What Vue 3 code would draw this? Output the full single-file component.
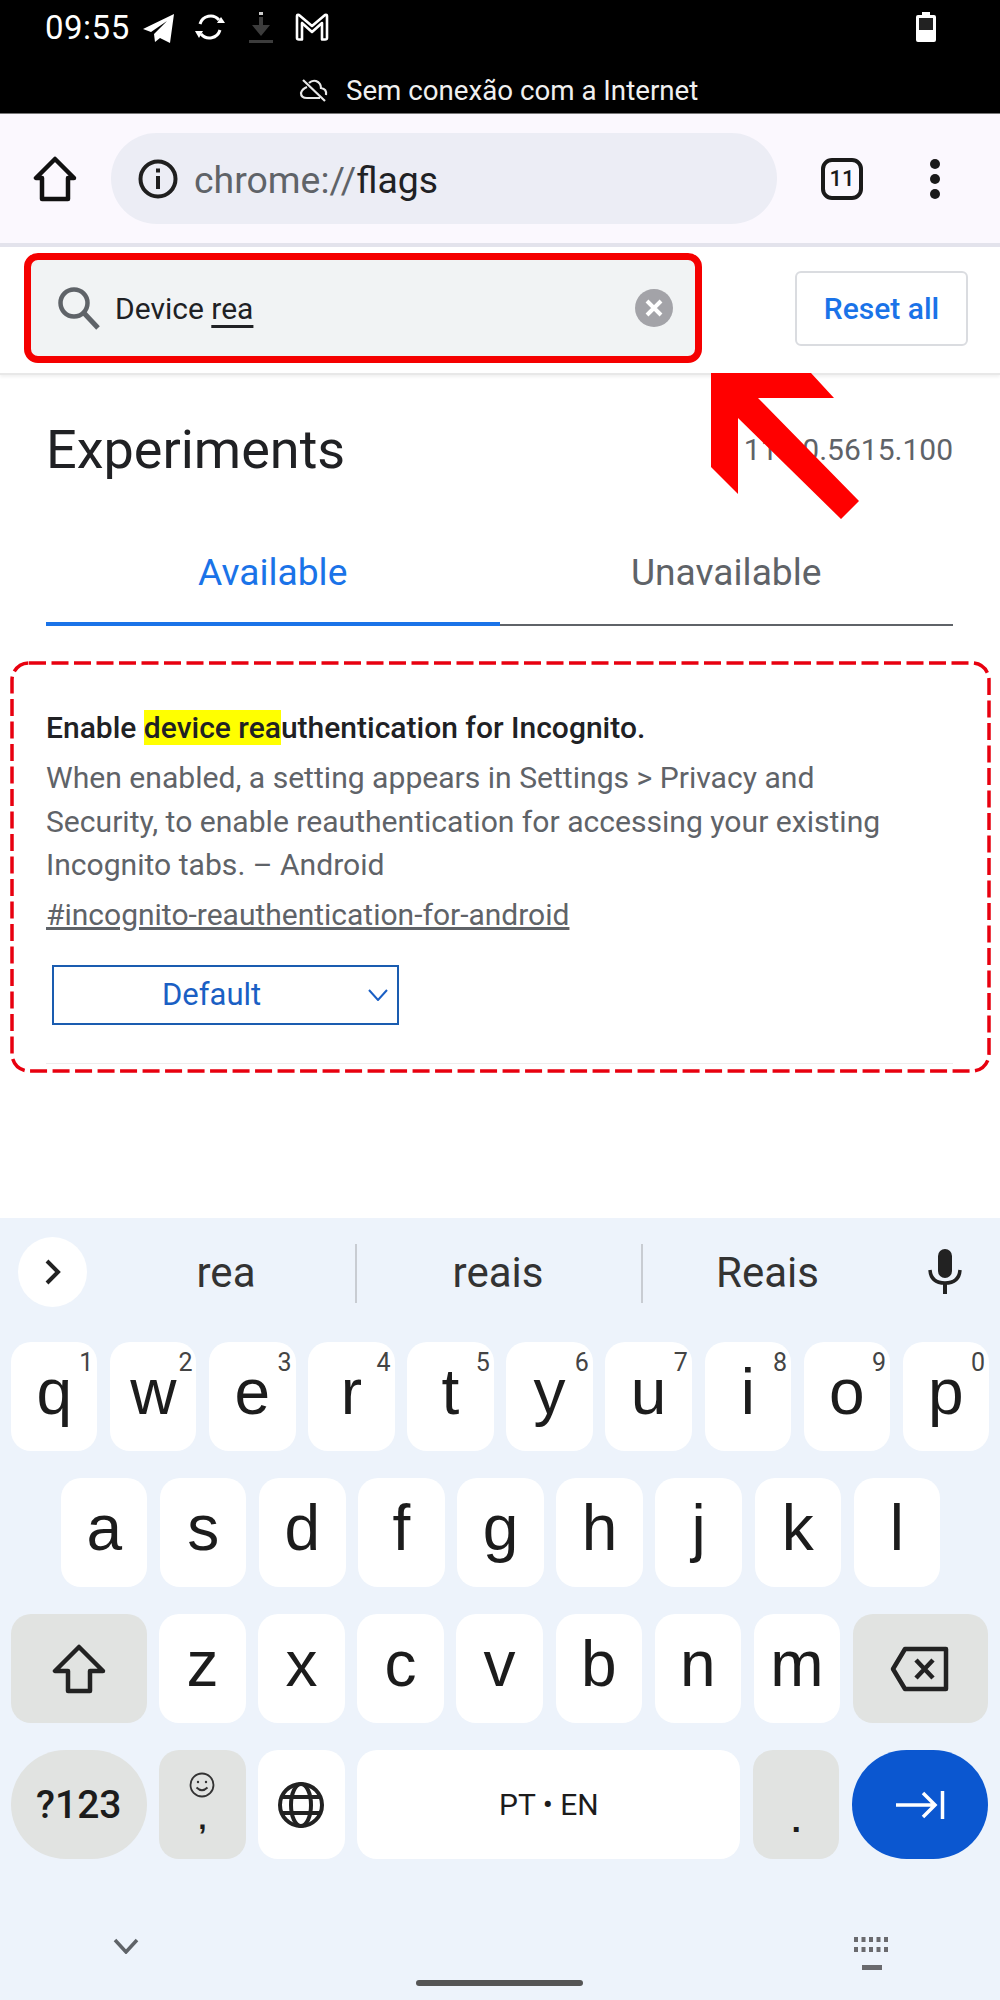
<template>
  <div class="phone">
    <div class="status">
      <div class="status-top">
        <span class="time">09:55</span>
        <svg class="ic-tg" width="34" height="32" viewBox="0 0 34 32"><path d="M1 17 L32 2 L28 31 L18 26 L13 30 L12 22 L25 9 L9 20 Z" fill="#fff"/></svg>
        <svg class="ic-sync" width="34" height="34" viewBox="0 0 34 34" fill="none" stroke="#fff" stroke-width="3"><path d="M7 14 A11 11 0 0 1 26 10"/><path d="M27 20 A11 11 0 0 1 8 24"/><path d="M24 13 H32 L28 7 Z" fill="#fff" stroke="none"/><path d="M2 21 H10 L6 28 Z" fill="#fff" stroke="none"/></svg>
        <svg class="ic-dl" width="24" height="32" viewBox="0 0 24 32"><path d="M10 0 H14 V3 H10 Z" fill="#ccc"/><path d="M10 5 H14 V13 H21 L12 24 L3 13 H10 Z" fill="#3c3c3c"/><path d="M0 28 H24 V31 H0 Z" fill="#3c3c3c"/></svg>
        <svg class="ic-m" width="34" height="28" viewBox="0 0 34 28" fill="none" stroke="#fff" stroke-width="2.6"><path d="M2 25 V3 Q2 1.5 4 2 L17 13 L30 2 Q32 1.5 32 3 V25 Q32 26.500 30 26.500 H27 V10 L17 19 L7 10 V26.500 H4 Q2 26.500 2 25 Z" stroke-linejoin="round"/></svg>
        <svg class="ic-batt" width="20" height="30" viewBox="0 0 20 30"><path d="M6 0 H14 V3 H18 Q20 3 20 5 V28 Q20 30 18 30 H2 Q0 30 0 28 V5 Q0 3 2 3 H6 Z" fill="#fff"/><rect x="3" y="6" width="14" height="12" fill="#222"/></svg>
      </div>
      <div class="offline">
        <svg width="30" height="24" viewBox="0 0 30 24" fill="none" stroke="#e8e8e8" stroke-width="2.200"><path d="M8 9 Q3 11 2 15 Q2 20 8 20 H21"/><path d="M10 5 Q13 2 17 3 Q22 5 22 10 Q28 11 27 17"/><path d="M4 2 L26 23"/></svg>
        <span>Sem conexão com a Internet</span>
      </div>
    </div>

    <div class="toolbar">
      <svg class="home" width="44" height="46" viewBox="0 0 44 46" fill="none" stroke="#111" stroke-width="4.500" stroke-linejoin="round"><path d="M22 3 L3 22 H9 V43 H35 V22 H41 Z"/></svg>
      <div class="omnibox">
        <svg width="42" height="42" viewBox="0 0 42 42" fill="none"><circle cx="21" cy="21" r="17.500" stroke="#1f1f1f" stroke-width="4"/><path d="M19 18 H23 V31 H19 Z M19 10.500 H23 V14.500 H19 Z" fill="#1f1f1f"/></svg>
        <span class="url"><span class="scheme">chrome://</span>flags</span>
      </div>
      <div class="tabs-count">11</div>
      <div class="menu"><i></i><i></i><i></i></div>
    </div>
    <div class="toolbar-line"></div>

    <div class="searchbar">
      <div class="search">
        <svg width="44" height="44" viewBox="0 0 44 44" fill="none" stroke="#5f6368" stroke-width="4.500"><circle cx="17" cy="17" r="13.500"/><path d="M27 27 L41 42" stroke-width="5"/></svg>
        <span class="query">Device <u>rea</u></span>
        <svg class="clear" width="38" height="38" viewBox="0 0 38 38"><circle cx="19" cy="19" r="19" fill="#a3a3a8"/><path d="M12 12 L26 26 M26 12 L12 26" stroke="#fff" stroke-width="4"/></svg>
      </div>
      <button class="reset">Reset all</button>
    </div>

    <div class="page">
      <div class="head">
        <h1>Experiments</h1>
        <span class="version">111.0.5615.100</span>
      </div>
      <div class="tabs">
        <div class="tab active">Available</div>
        <div class="tab">Unavailable</div>
      </div>
      <div class="flag">
        <div class="flag-title">Enable <mark>device rea</mark>uthentication for Incognito.</div>
        <p class="flag-desc">When enabled, a setting appears in Settings &gt; Privacy and<br>Security, to enable reauthentication for accessing your existing<br>Incognito tabs. – Android</p>
        <a class="flag-link">#incognito-reauthentication-for-android</a>
        <div class="select">
          <span>Default</span>
          <svg width="20" height="12" viewBox="0 0 20 12" fill="none" stroke="#1a5fc4" stroke-width="2"><path d="M1 1 L10 11 L19 1"/></svg>
        </div>
      </div>
    </div>

    <div class="kb">
      <div class="suggest">
        <div class="expand">
          <svg width="18" height="26" viewBox="0 0 18 26" fill="none" stroke="#222" stroke-width="4"><path d="M3 2 L14 13 L3 24"/></svg>
        </div>
        <div class="word">rea</div>
        <div class="word">reais</div>
        <div class="word">Reais</div>
        <svg class="mic" width="36" height="46" viewBox="0 0 36 46"><rect x="11" y="0" width="14" height="29" rx="7" fill="#222"/><path d="M3 21 Q4 34 18 34 Q32 34 33 21" fill="none" stroke="#222" stroke-width="3.500"/><path d="M16 34 H20 V45 H16 Z" fill="#222"/></svg>
      </div>

      <div class="row">
        <div v-for="k in row1" :key="k.l" class="key ltr">{{ k.l }}<sup>{{ k.n }}</sup></div>
      </div>
      <div class="row row2">
        <div v-for="l in row2" :key="l" class="key ltr">{{ l }}</div>
      </div>
      <div class="row">
        <div class="key wide grey">
          <svg width="54" height="50" viewBox="0 0 54 50" fill="none" stroke="#222" stroke-width="4.500" stroke-linejoin="round"><path d="M27 3 L3 27 H16 V47 H38 V27 H51 Z"/></svg>
        </div>
        <div v-for="l in row3" :key="l" class="key ltr">{{ l }}</div>
        <div class="key wide grey">
          <svg width="60" height="46" viewBox="0 0 60 46" fill="none" stroke="#222" stroke-width="4.500" stroke-linejoin="round"><path d="M15 3 H56 V43 H15 L3 23 Z"/><path d="M26 14 L43 32 M43 14 L26 32"/></svg>
        </div>
      </div>
      <div class="row">
        <div class="key wide grey pill sym">?123</div>
        <div class="key grey emoji">
          <svg width="26" height="26" viewBox="0 0 26 26" fill="none" stroke="#333" stroke-width="1.800"><circle cx="13" cy="13" r="11.500"/><circle cx="9" cy="10" r="1.200" fill="#333" stroke="none"/><circle cx="17" cy="10" r="1.200" fill="#333" stroke="none"/><path d="M7.500 15.500 Q13 21 18.500 15.500"/></svg>
          <span>,</span>
        </div>
        <div class="key">
          <svg width="46" height="46" viewBox="0 0 46 46" fill="none" stroke="#222" stroke-width="4"><circle cx="23" cy="23" r="21"/><ellipse cx="23" cy="23" rx="10" ry="21"/><path d="M4 15 H42 M4 31 H42"/></svg>
        </div>
        <div class="key space">PT • EN</div>
        <div class="key grey dot">.</div>
        <div class="key wide pill enter">
          <svg width="50" height="30" viewBox="0 0 50 30" fill="none" stroke="#fff" stroke-width="3.500"><path d="M1 15 H40 M28 3 L40 15 L28 27"/><path d="M47.500 1 V29"/></svg>
        </div>
      </div>

      <div class="kb-foot">
        <svg class="hide-kb" width="26" height="16" viewBox="0 0 26 16" fill="none" stroke="#5f6368" stroke-width="3.500"><path d="M2 2 L13 14 L24 2"/></svg>
        <svg width="36" height="40" viewBox="0 0 36 40" fill="#6a6a6e"><rect v-for="d in kbDots" :key="d.x + '-' + d.y" :x="d.x" :y="d.y" width="4" height="5"/><rect x="8" y="32" width="20" height="5"/></svg>
      </div>
      <div class="home-bar"></div>
    </div>

    <svg class="marks" width="1000" height="2000" viewBox="0 0 1000 2000" fill="none">
      <path d="M711 373 H811 L834 398 H758 L859 501 L841 519 L738 418 V494 L711 467 Z" fill="#ff0000"/>
      <rect x="12" y="663" width="977" height="408" rx="17" stroke="#e8000f" stroke-width="3.500" stroke-dasharray="17 5.500"/>
    </svg>
  </div>
</template>

<script setup>
const row1 = [
  { l: 'q', n: 1 }, { l: 'w', n: 2 }, { l: 'e', n: 3 }, { l: 'r', n: 4 }, { l: 't', n: 5 },
  { l: 'y', n: 6 }, { l: 'u', n: 7 }, { l: 'i', n: 8 }, { l: 'o', n: 9 }, { l: 'p', n: 0 }
]
const row2 = ['a', 's', 'd', 'f', 'g', 'h', 'j', 'k', 'l']
const row3 = ['z', 'x', 'c', 'v', 'b', 'n', 'm']

const kbDots = []
for (let y = 4; y < 24; y += 10) {
  for (let x = 0; x < 36; x += 7.5) kbDots.push({ x, y })
}
</script>

<style scoped>
.phone {
  position: relative;
  width: 1000px;
  height: 2000px;
  overflow: hidden;
  display: flex;
  flex-direction: column;
  background: #fff;
  font-family: Roboto, "Liberation Sans", sans-serif;
  color: #202124;
}
.status {
  height: 113px;
  background: #000;
  color: #fff;
  border-bottom: 1px solid #777;
  flex-shrink: 0;
}
.status-top {
  height: 54px;
  padding-left: 45px;
  display: flex;
  align-items: center;
}
.time {
  font-size: 33px;
  letter-spacing: 0.5px;
  width: 97px;
}
.ic-tg { margin-right: 17px; margin-top: 1px; }
.ic-sync { margin-right: 22px; }
.ic-dl { margin-right: 22px; margin-top: 2px; }
.ic-m { margin-top: 0; }
.ic-batt { margin-left: auto; margin-right: 64px; }
.offline {
  height: 59px;
  padding-left: 299px;
  padding-top: 13px;
  display: flex;
  align-items: center;
  gap: 17px;
  font-size: 27.700px;
  color: #f0f0f0;
  box-sizing: border-box;
}
.toolbar {
  height: 129px;
  flex-shrink: 0;
  background: #fbf8fe;
  display: flex;
  align-items: center;
  position: relative;
}
.home { margin-left: 33px; margin-right: 34px; margin-top: 1px; }
.omnibox {
  width: 666px;
  height: 91px;
  border-radius: 46px;
  background: #ecedf5;
  display: flex;
  align-items: center;
  padding-left: 26px;
  box-sizing: border-box;
  gap: 15px;
}
.url { font-size: 37.400px; color: #202124; margin-top: 3px; }
.scheme { color: #5f6368; }
.tabs-count {
  margin-left: 44px;
  width: 34px;
  height: 34px;
  border: 4px solid #1a1a1a;
  border-radius: 11px;
  display: flex;
  align-items: center;
  justify-content: center;
  font-size: 22px;
  font-weight: 500;
  color: #1a1a1a;
  box-sizing: content-box;
}
.menu {
  margin-left: 67px;
  display: flex;
  flex-direction: column;
  gap: 5px;
}
.menu i {
  display: block;
  width: 10px;
  height: 10px;
  border-radius: 50%;
  background: #1a1a1a;
}
.toolbar-line {
  height: 4px;
  flex-shrink: 0;
  background: #e3e3ec;
}
.searchbar {
  height: 128px;
  flex-shrink: 0;
  display: flex;
  padding-left: 24px;
  box-sizing: border-box;
  border-bottom: 2px solid #e8e8e8;
  box-shadow: 0 2px 3px rgba(0, 0, 0, 0.06);
  position: relative;
}
.search {
  width: 678px;
  height: 110px;
  margin-top: 6px;
  box-sizing: border-box;
  border: 7px solid #f50000;
  border-radius: 14px;
  background: #f1f3f4;
  display: flex;
  align-items: center;
  padding-left: 26px;
  padding-right: 22px;
}
.query { margin-left: 14px; font-size: 30px; color: #202124; }
.query u { text-underline-offset: 6px; }
.clear { margin-left: auto; }
.reset {
  margin-left: 93px;
  margin-top: 24px;
  width: 173px;
  height: 75px;
  background: #fff;
  border: 2px solid #dadce0;
  border-radius: 6px;
  color: #1a73e8;
  font-family: inherit;
  font-size: 30px;
  font-weight: 500;
  padding: 0;
}
.page { flex: 1; padding: 0 47px 0 46px; }
.head {
  height: 149px;
  display: flex;
  justify-content: space-between;
  align-items: center;
}
h1 { margin: 0; font-size: 54px; font-weight: 400; color: #202124; }
.version { font-size: 30px; color: #5f6368; }
.tabs { display: flex; }
.tab {
  flex: 1;
  height: 102px;
  box-sizing: border-box;
  padding-top: 26px;
  text-align: center;
  font-size: 37.200px;
  color: #5f6368;
  border-bottom: 2px solid #5f6368;
}
.tab.active {
  color: #1a73e8;
  border-bottom: 4px solid #1a73e8;
}
.flag {
  padding: 85px 0 0;
  box-sizing: border-box;
  border-bottom: 1px solid #ececec;
  height: 438px;
}
.flag-title { font-size: 30px; font-weight: 500; line-height: 40px; color: #202124; margin-top: -3px; }
mark { background: #ffff00; color: inherit; padding: 0; }
.flag-desc {
  margin: 8px 0 0;
  font-size: 30.100px;
  line-height: 43.500px;
  color: #5f6368;
}
.flag-link {
  display: block;
  margin-top: 6px;
  font-size: 30px;
  line-height: 44px;
  color: #5f6368;
  text-decoration: underline;
}
.select {
  margin: 28px 0 0 6px;
  width: 347px;
  height: 60px;
  box-sizing: border-box;
  border: 2px solid #1a5cb0;
  display: flex;
  align-items: center;
  justify-content: space-between;
  padding: 0 9px 0 108px;
  font-size: 31px;
  color: #1a5fc4;
}
.kb {
  height: 782px;
  flex-shrink: 0;
  background: #edf3fb;
  padding: 19px 12px 0 11px;
  box-sizing: border-box;
  position: relative;
}
.suggest {
  display: flex;
  align-items: center;
  height: 70px;
  padding-left: 7px;
  margin-bottom: 35px;
  position: relative;
}
.expand {
  width: 69px;
  height: 70px;
  border-radius: 50%;
  background: #fff;
  display: flex;
  align-items: center;
  justify-content: center;
}
.word {
  box-sizing: border-box;
  text-align: center;
  font-size: 42px;
  color: #333;
  position: relative;
}
.word:nth-of-type(2) { width: 268px; padding-left: 10px; }
.word:nth-of-type(3) { width: 286px; }
.word:nth-of-type(4) { width: 253px; }
.word + .word::before {
  content: "";
  position: absolute;
  left: 0;
  top: -4px;
  bottom: -6px;
  width: 2px;
  background: #c8ccd2;
}
.mic { margin-left: 33px; }
.row {
  display: flex;
  gap: 12.700px;
  height: 109px;
  margin-bottom: 27px;
}
.row2 { padding-left: 50px; }
.key {
  position: relative;
  width: 86.400px;
  flex-shrink: 0;
  background: #fff;
  border-radius: 20px;
  display: flex;
  align-items: center;
  justify-content: center;
  font-family: "Liberation Sans", Arial, sans-serif;
  font-size: 64px;
  color: #1c1c1c;
}
.ltr { padding-bottom: 10px; box-sizing: border-box; }
.key sup {
  position: absolute;
  top: 6px;
  right: 4px;
  font-family: Roboto, sans-serif;
  font-size: 25px;
  line-height: 1.200;
  color: #444;
  vertical-align: baseline;
}
.wide { width: 135.500px; }
.grey { background: #e1e3e1; }
.pill { border-radius: 56px; }
.sym { font-family: Roboto, sans-serif; font-size: 39px; font-weight: 500; }
.emoji { flex-direction: column; font-size: 30px; gap: 8px; padding-bottom: 6px; box-sizing: border-box; }
.emoji span { font-weight: 700; line-height: 26px; }
.space { width: 383px; font-family: Roboto, sans-serif; font-size: 30px; }
.dot { font-size: 34px; padding-top: 32px; box-sizing: border-box; font-weight: 700; }
.enter { background: #0b57d0; }
.kb-foot {
  display: flex;
  justify-content: space-between;
  align-items: center;
  padding: 47px 98px 0 102px;
}
.hide-kb { margin-bottom: 14px; }
.home-bar {
  position: absolute;
  left: 416px;
  bottom: 14px;
  width: 167px;
  height: 6px;
  border-radius: 3px;
  background: #555;
}
.marks { position: absolute; left: 0; top: 0; pointer-events: none; }
</style>
